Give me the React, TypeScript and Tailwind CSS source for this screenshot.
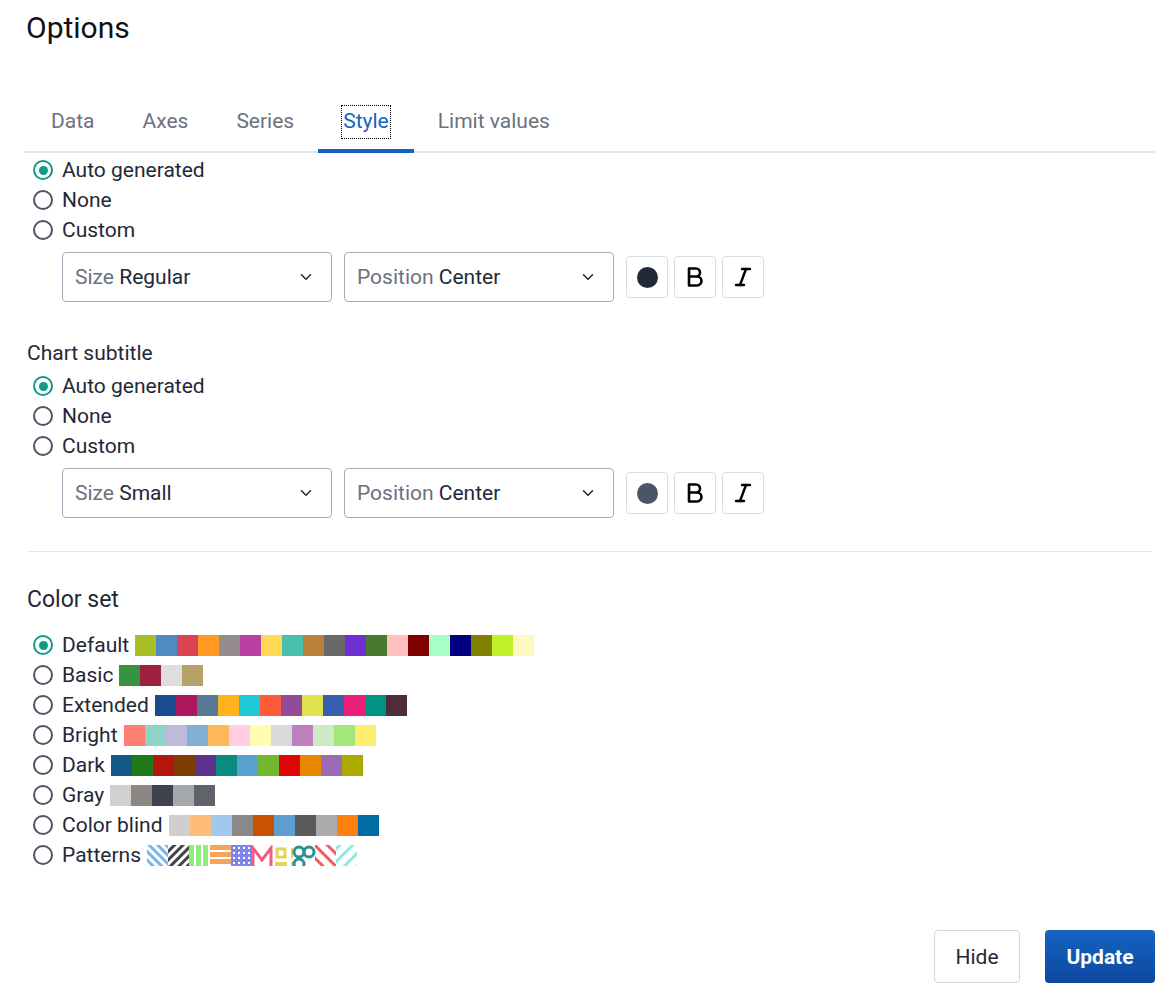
import { ChevronDown } from 'lucide-react'

const tabs = ['Data', 'Axes', 'Series', 'Style', 'Limit values']

const colorSets: { name: string; colors: string[] }[] = [
  {
    name: 'Default',
    colors: ['#a9bf26', '#4f8bc2', '#d94452', '#ff9b22', '#958d8d', '#b840a0', '#ffd955', '#4abfad', '#b8823a', '#696969', '#6e30d1', '#487a2e', '#ffbfbf', '#800000', '#a6ffc4', '#000080', '#808000', '#bff226', '#fff9c0'],
  },
  { name: 'Basic', colors: ['#359441', '#9e223e', '#dedede', '#b5a269'] },
  {
    name: 'Extended',
    colors: ['#1a4b8d', '#ad175b', '#577a94', '#ffb21b', '#1ec8d4', '#ff5b3a', '#914b98', '#dfe24a', '#375fad', '#e82079', '#009283', '#4f2c39'],
  },
  {
    name: 'Bright',
    colors: ['#ff8072', '#8bd4c7', '#bebad8', '#80b1d4', '#ffb65c', '#ffcde4', '#fffcb4', '#d9d9d9', '#bc80bd', '#ccebc5', '#a1e879', '#ffed6f'],
  },
  {
    name: 'Dark',
    colors: ['#125889', '#1f7a1a', '#b5150f', '#7f3d03', '#5d328c', '#098b7f', '#58a1cf', '#74b72d', '#dd0506', '#e88800', '#9b6cb1', '#acac00'],
  },
  { name: 'Gray', colors: ['#d0d0d0', '#8e8682', '#3f434e', '#a4aaab', '#61636b'] },
  {
    name: 'Color blind',
    colors: ['#cfcfcf', '#ffbb78', '#a2c8ec', '#898989', '#c85200', '#5f9ed1', '#595959', '#ababab', '#ff800e', '#006ba4'],
  },
]

function RadioDot({ checked }: { checked?: boolean }) {
  return (
    <span
      className={
        checked
          ? 'ml-[9px] flex h-[20px] w-[20px] items-center justify-center rounded-full border-[2.5px] border-[#0f9a85]'
          : 'ml-[9px] h-[20px] w-[20px] rounded-full border-2 border-[#4b5563]'
      }
    >
      {checked && <span className="h-[9px] w-[9px] rounded-full bg-[#0f9a85]" />}
    </span>
  )
}

function Radio({ label, checked }: { label: string; checked?: boolean }) {
  return (
    <div className="flex h-[30px] items-center">
      <RadioDot checked={checked} />
      <span className="ml-[9px] pt-[2px] text-[21px] text-[#1f2937]">{label}</span>
    </div>
  )
}

function Select({ label, value }: { label: string; value: string }) {
  return (
    <div className="flex h-[50px] w-[270px] items-center justify-between rounded-[4px] border border-[#a3acb9] pl-[12px] pr-[16px]">
      <span className="pt-[2px] text-[21px]">
        <span className="text-[#6b7280]">{label}</span> <span className="text-[#1f2937]">{value}</span>
      </span>
      <ChevronDown size={18} strokeWidth={2} className="text-[#1f2937]" />
    </div>
  )
}

function IconButtons({ dot }: { dot: string }) {
  return (
    <div className="flex gap-[6px]">
      <div className="flex h-[42px] w-[42px] items-center justify-center rounded-[4px] border border-[#d8dde4]">
        <span className={`h-[21px] w-[21px] rounded-full ${dot}`} />
      </div>
      <div className="flex h-[42px] w-[42px] items-center justify-center rounded-[4px] border border-[#d8dde4]">
        <svg width="24" height="24" viewBox="0 0 24 24" fill="none" stroke="#000" strokeWidth="2.6" strokeLinejoin="round">
          <path d="M6 3.5h7a4 4 0 0 1 0 8H6zM6 11.5h8a4.5 4.5 0 0 1 0 9H6z" />
        </svg>
      </div>
      <div className="flex h-[42px] w-[42px] items-center justify-center rounded-[4px] border border-[#d8dde4]">
        <svg width="24" height="24" viewBox="0 0 24 24" fill="none" stroke="#000" strokeWidth="2.4" strokeLinecap="round">
          <line x1="11" y1="4" x2="19" y2="4" />
          <line x1="5" y1="20" x2="13" y2="20" />
          <line x1="15" y1="4" x2="9" y2="20" />
        </svg>
      </div>
    </div>
  )
}

function TitleBlock({ size, dot }: { size: string; dot: string }) {
  return (
    <div>
      <Radio label="Auto generated" checked />
      <Radio label="None" />
      <Radio label="Custom" />
      <div className="mt-[7px] ml-[38px] flex items-center gap-[12px]">
        <Select label="Size" value={size} />
        <Select label="Position" value="Center" />
        <IconButtons dot={dot} />
      </div>
    </div>
  )
}

function Patterns() {
  return (
    <svg width="210" height="21" viewBox="0 0 210 21">
      <defs>
        <pattern id="p1" width="6" height="6" patternUnits="userSpaceOnUse" patternTransform="rotate(-45)">
          <rect width="3" height="6" fill="#7cb5ec" />
        </pattern>
        <pattern id="p2" width="6" height="6" patternUnits="userSpaceOnUse" patternTransform="rotate(45)">
          <rect width="3" height="6" fill="#434348" />
        </pattern>
        <pattern id="p9" width="9" height="9" patternUnits="userSpaceOnUse" patternTransform="rotate(-45)">
          <rect width="3" height="9" fill="#f45b5b" />
        </pattern>
        <pattern id="p10" width="9" height="9" patternUnits="userSpaceOnUse" patternTransform="rotate(45)">
          <rect width="3" height="9" fill="#91e8e1" />
        </pattern>
      </defs>
      <rect x="0" y="0" width="21" height="21" fill="url(#p1)" />
      <rect x="21" y="0" width="21" height="21" fill="url(#p2)" />
      <g fill="#90ed7d">
        <rect x="42" y="0" width="5" height="21" />
        <rect x="49" y="0" width="5" height="21" />
        <rect x="56" y="0" width="5" height="21" />
      </g>
      <g fill="#f7a35c">
        <rect x="63" y="0" width="21" height="5" />
        <rect x="63" y="7" width="21" height="5" />
        <rect x="63" y="14" width="21" height="5" />
      </g>
      <rect x="84" y="0" width="21" height="21" fill="#8085e9" />
      <g fill="#fff">
        {[2, 7, 12, 17].map((x) =>
          [2, 7, 12, 17].map((y) => <rect key={`${x}-${y}`} x={84 + x} y={y} width="2" height="2" />),
        )}
      </g>
      <polyline points="106,21 106,3 115,15 124,3 124,21" fill="none" stroke="#f15c80" strokeWidth="3" />
      <g fill="none" stroke="#e4d354" strokeWidth="3">
        <rect x="130" y="4" width="8" height="8" />
      </g>
      <g fill="#e4d354">
        <rect x="128" y="17" width="12" height="4" />
        <rect x="144" y="3" width="2" height="10" />
        <rect x="144" y="17" width="2" height="4" />
      </g>
      <g fill="none" stroke="#2b908f" strokeWidth="3">
        <circle cx="152" cy="7" r="5" />
        <circle cx="152" cy="19" r="5" />
        <circle cx="162" cy="7" r="5" />
      </g>
      <rect x="168" y="0" width="21" height="21" fill="url(#p9)" />
      <rect x="189" y="0" width="21" height="21" fill="url(#p10)" />
    </svg>
  )
}

export default function App() {
  return (
    <div className="min-h-[1000px] bg-white pl-6 pr-[7px] pt-[10px]" style={{ fontFamily: 'Roboto, "Liberation Sans", sans-serif' }}>
      <h1 className="pl-[2px] text-[30px] font-normal leading-[36px] text-[#111]">Options</h1>

      <div className="mt-[47px] flex border-b-2 border-[#e2e5ea] pl-[3px]">
        {tabs.map((t) => (
          <div
            key={t}
            className={
              t === 'Style'
                ? '-mb-[2px] flex h-[60px] items-center border-b-4 border-[#1565c0] px-6 pt-[2px] text-[21px] text-[#1565c0]'
                : '-mb-[2px] flex h-[60px] items-center border-b-4 border-transparent px-6 pt-[2px] text-[21px] text-[#6b7280]'
            }
          >
            <span className={t === 'Style' ? 'px-[1px] outline-1 outline-dotted outline-black' : ''}>{t}</span>
          </div>
        ))}
      </div>

      <div className="pt-[2px]">
        <TitleBlock size="Regular" dot="bg-[#1f2937]" />
      </div>

      <div className="mt-[36px] pl-[3px] text-[21px] leading-[30px] text-[#1f2937]">Chart subtitle</div>
      <div className="mt-[3px]">
        <TitleBlock size="Small" dot="bg-[#4a5568]" />
      </div>

      <div className="ml-[3px] mr-[3px] mt-[33px] border-t border-[#e5e7eb]" />

      <div className="mt-[31px] pl-[3px] pt-[2px] text-[23px] font-normal leading-[30px] text-[#1f2937]">Color set</div>

      <div className="mt-[15px]">
        {colorSets.map((set, i) => (
          <div key={set.name} className="flex h-[30px] items-center">
            <RadioDot checked={i === 0} />
            <span className="ml-[9px] pt-[2px] text-[21px] text-[#1f2937]">{set.name}</span>
            <div className="ml-[6px] flex">
              {set.colors.map((c, j) => (
                <span key={j} className="h-[21px] w-[21px]" style={{ backgroundColor: c }} />
              ))}
            </div>
          </div>
        ))}
        <div className="flex h-[30px] items-center">
          <RadioDot />
          <span className="ml-[9px] pt-[2px] text-[21px] text-[#1f2937]">Patterns</span>
          <div className="ml-[6px] flex">
            <Patterns />
          </div>
        </div>
      </div>

      <div className="mt-[60px] flex justify-end gap-[25px]">
        <button className="h-[53px] w-[86px] rounded-[4px] border border-[#d1d8e0] pt-[2px] text-[21px] text-[#1f2937]">Hide</button>
        <button className="h-[53px] w-[110px] rounded-[4px] bg-gradient-to-b from-[#1565c0] to-[#0d47a1] pt-[2px] text-[21px] font-bold text-white">
          Update
        </button>
      </div>
    </div>
  )
}
